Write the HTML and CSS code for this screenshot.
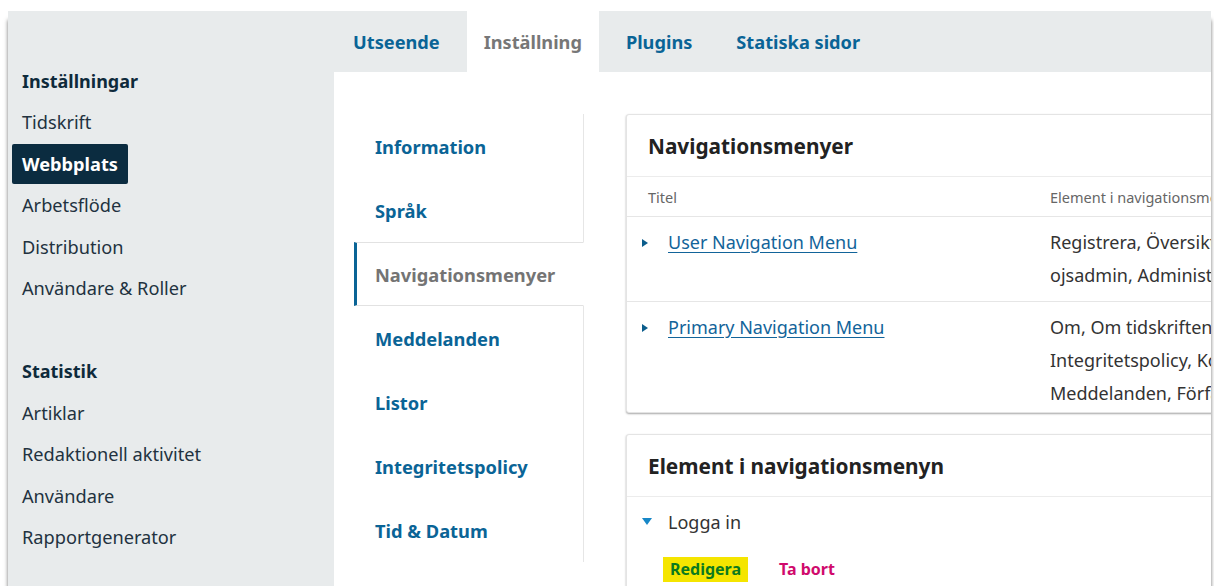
FILE: index.html
```html
<!DOCTYPE html>
<html lang="sv">
<head>
<meta charset="utf-8">
<title>Webbplats – Inställningar</title>
<link rel="stylesheet" href="styles.css">
</head>
<body>
<div class="app">
  <aside class="sidebar">
    <div class="side-group">
      <div class="side-heading">Inställningar</div>
      <a class="side-link">Tidskrift</a>
      <a class="side-link is-current">Webbplats</a>
      <a class="side-link">Arbetsflöde</a>
      <a class="side-link">Distribution</a>
      <a class="side-link">Användare &amp; Roller</a>
    </div>
    <div class="side-group">
      <div class="side-heading">Statistik</div>
      <a class="side-link">Artiklar</a>
      <a class="side-link">Redaktionell aktivitet</a>
      <a class="side-link">Användare</a>
      <a class="side-link">Rapportgenerator</a>
    </div>
  </aside>

  <main class="main">
    <nav class="tabs">
      <a class="tab">Utseende</a>
      <a class="tab is-active">Inställning</a>
      <a class="tab">Plugins</a>
      <a class="tab">Statiska sidor</a>
    </nav>

    <div class="tab-panel">
      <ul class="subnav">
        <li class="subnav-item">Information</li>
        <li class="subnav-item">Språk</li>
        <li class="subnav-item is-active">Navigationsmenyer</li>
        <li class="subnav-item">Meddelanden</li>
        <li class="subnav-item">Listor</li>
        <li class="subnav-item">Integritetspolicy</li>
        <li class="subnav-item">Tid &amp; Datum</li>
      </ul>

      <div class="panels">
        <section class="card">
          <header class="card-header">Navigationsmenyer</header>
          <div class="grid-head">
            <span>Titel</span>
            <span>Element i navigationsmenyn</span>
          </div>
          <div class="grid-row">
            <div class="row-title">
              <span class="caret caret-right"></span>
              <a class="row-link">User Navigation Menu</a>
            </div>
            <div class="row-items">
              <span>Registrera, Översikt, Logga in, Visa profil,</span>
              <span>ojsadmin, Administration, Logga ut</span>
            </div>
          </div>
          <div class="grid-row grid-row-last">
            <div class="row-title">
              <span class="caret caret-right"></span>
              <a class="row-link">Primary Navigation Menu</a>
            </div>
            <div class="row-items">
              <span>Om, Om tidskriften, Inlämningar, Redaktion,</span>
              <span>Integritetspolicy, Kontakt, Aktuellt, Arkiv,</span>
              <span>Meddelanden, Författarinstruktioner</span>
            </div>
          </div>
        </section>

        <section class="card card-items">
          <header class="card-header">Element i navigationsmenyn</header>
          <div class="item-row">
            <span class="caret caret-down"></span>
            <span class="item-name">Logga in</span>
          </div>
          <div class="item-actions">
            <a class="action action-edit">Redigera</a>
            <a class="action action-delete">Ta bort</a>
          </div>
        </section>
      </div>
    </div>
  </main>
</div>
</body>
</html>
```

FILE: styles.css
```css
* {
  box-sizing: border-box;
}

html,
body {
  margin: 0;
  background: #fff;
  overflow: hidden;
}

body {
  font-family: "Noto Sans", "Open Sans", sans-serif;
  color: #222;
}

a {
  cursor: pointer;
}

/* outer application frame */
.app {
  margin: 11px 0 0 8px;
  width: 1203px;
  height: 620px;
  display: grid;
  grid-template-columns: 326px 1fr;
  background: #e8ebec;
  box-shadow: 0 9px 4px rgba(0, 0, 0, 0.55);
  overflow: hidden;
}

/* left navigation */
.sidebar {
  padding-top: 49px;
}

.side-group + .side-group {
  margin-top: 41.5px;
}

.side-heading,
.side-link {
  height: 41.5px;
  display: flex;
  align-items: center;
  width: fit-content;
  margin-left: 4px;
  padding: 0 10px;
  white-space: nowrap;
}

.side-heading {
  font-size: 18px;
  font-weight: 700;
  color: #0e2a3b;
}

.side-link {
  font-size: 18.2px;
  color: #22323f;
  text-decoration: none;
}

.side-link.is-current {
  height: 40px;
  margin-top: 0.75px;
  margin-bottom: 0.75px;
  background: #0b2c40;
  color: #fff;
  font-weight: 700;
  border-radius: 2px;
}

/* main column */
.main {
  display: flex;
  flex-direction: column;
  min-width: 0;
}

.tabs {
  display: flex;
  gap: 10px;
  height: 61px;
  padding-left: 2px;
  flex-shrink: 0;
}

.tab {
  display: flex;
  align-items: center;
  padding: 0 17px;
  font-size: 18.2px;
  font-weight: 700;
  color: #0a6496;
  white-space: nowrap;
}

.tab.is-active {
  background: #fff;
  color: #777;
}

.tab-panel {
  flex: 1;
  background: #fff;
  display: flex;
  align-items: flex-start;
  gap: 42px;
  padding: 42px 0 0 20px;
}

/* vertical sub navigation */
.subnav {
  list-style: none;
  margin: 0;
  padding: 0;
  width: 230px;
  flex-shrink: 0;
}

.subnav-item {
  height: 64px;
  display: flex;
  align-items: center;
  padding-left: 21px;
  border-right: 1px solid #e6e6e6;
  font-size: 18.3px;
  font-weight: 700;
  color: #0a6496;
  white-space: nowrap;
}

.subnav-item.is-active {
  padding-left: 18px;
  color: #747474;
  border-left: 3px solid #0a6496;
  border-top: 1px solid #e2e2e2;
  border-bottom: 1px solid #e2e2e2;
  border-right-color: transparent;
}

/* panels */
.panels {
  flex-shrink: 0;
  width: 760px;
  display: flex;
  flex-direction: column;
  gap: 21px;
}

.card {
  border: 1px solid #e4e4e4;
  border-radius: 3px;
  box-shadow: 0 1px 2px rgba(0, 0, 0, 0.35);
  background: #fff;
}

.card-items {
  min-height: 240px;
}

.card-header {
  height: 62px;
  display: flex;
  align-items: center;
  padding-left: 21px;
  border-bottom: 1px solid #ececec;
  font-size: 20.8px;
  font-weight: 700;
  color: #222;
  white-space: nowrap;
}

.grid-head {
  height: 40px;
  display: grid;
  grid-template-columns: 402px 1fr;
  align-items: center;
  padding-left: 21px;
  border-bottom: 1px solid #e6e6e6;
  font-size: 14.5px;
  color: #666;
  white-space: nowrap;
}

.grid-row {
  display: grid;
  grid-template-columns: 408px 1fr;
  padding: 9px 0 9px 15px;
  border-bottom: 1px solid #e6e6e6;
  font-size: 18px;
  line-height: 33px;
}

.grid-row-last {
  border-bottom: 0;
  padding-bottom: 2px;
}

.row-title {
  display: flex;
  align-items: center;
  gap: 20px;
  height: 33px;
}

.row-link {
  color: #12649a;
  text-decoration: underline;
  text-underline-offset: 3px;
  white-space: nowrap;
}

.row-items {
  display: flex;
  flex-direction: column;
  white-space: nowrap;
  color: #333;
}

.caret {
  width: 0;
  height: 0;
  flex-shrink: 0;
}

.caret-right {
  border-top: 4.5px solid transparent;
  border-bottom: 4.5px solid transparent;
  border-left: 6px solid #0b5d8c;
}

.caret-down {
  border-left: 5px solid transparent;
  border-right: 5px solid transparent;
  border-top: 7px solid #1787c7;
}

/* menu item list */
.item-row {
  display: flex;
  align-items: center;
  gap: 16px;
  height: 33px;
  margin-top: 8px;
  padding-left: 15px;
  font-size: 18px;
  color: #333;
}

.item-actions {
  display: flex;
  gap: 24px;
  margin-top: 19px;
  padding-left: 36px;
}

.action {
  height: 25px;
  line-height: 25px;
  padding: 0 7px;
  font-size: 16px;
  font-weight: 700;
  white-space: nowrap;
}

.action-edit {
  background: #f5e500;
  color: #0b7a1f;
}

.action-delete {
  color: #d00a6c;
}
```
